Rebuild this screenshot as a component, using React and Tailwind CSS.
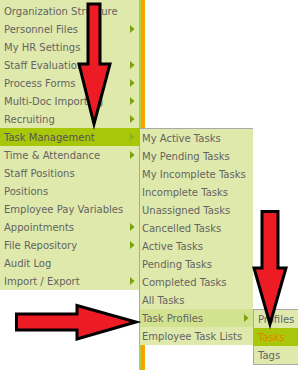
import React from 'react';

const mainItems = [
  { label: 'Organization Structure' },
  { label: 'Personnel Files', sub: true },
  { label: 'My HR Settings' },
  { label: 'Staff Evaluations', sub: true },
  { label: 'Process Forms', sub: true },
  { label: 'Multi-Doc Importing', sub: true },
  { label: 'Recruiting', sub: true },
  { label: 'Task Management', sub: true, active: true },
  { label: 'Time & Attendance', sub: true },
  { label: 'Staff Positions' },
  { label: 'Positions' },
  { label: 'Employee Pay Variables' },
  { label: 'Appointments', sub: true },
  { label: 'File Repository', sub: true },
  { label: 'Audit Log' },
  { label: 'Import / Export', sub: true },
];

const taskItems = [
  { label: 'My Active Tasks' },
  { label: 'My Pending Tasks' },
  { label: 'My Incomplete Tasks' },
  { label: 'Incomplete Tasks' },
  { label: 'Unassigned Tasks' },
  { label: 'Cancelled Tasks' },
  { label: 'Active Tasks' },
  { label: 'Pending Tasks' },
  { label: 'Completed Tasks' },
  { label: 'All Tasks' },
  { label: 'Task Profiles', sub: true, hover: true },
  { label: 'Employee Task Lists' },
];

const profileItems = [
  { label: 'Profiles' },
  { label: 'Tasks', active: true },
  { label: 'Tags' },
];

const SubArrow = ({ light }) => (
  <svg width="5" height="8" viewBox="0 0 5 8" className="shrink-0">
    <polygon points="0,0 4.5,4 0,8" fill={light ? '#8db31a' : '#7ba10d'} />
  </svg>
);

// red annotation arrows drawn over the menu
const Annotations = () => (
  <svg className="absolute inset-0 pointer-events-none" width="298" height="370">
    <g fill="#ed1c24" stroke="#000" strokeWidth="3" strokeLinejoin="miter">
      <polygon points="88,4 100,4 100,64 110,64 94,124 79,64 88,64" />
      <polygon points="16.5,314 77,314 77,305.5 136,322 77,339 77,330 16.5,330" />
      <polygon points="262,211.5 278,211.5 278,268 286,268 270,324 254,268 262,268" />
    </g>
  </svg>
);

export default function App() {
  return (
    <div className="relative w-[298px] h-[370px] overflow-hidden bg-white font-['DejaVu_Sans',sans-serif] text-[10px] text-[#646464]">
      <div className="flex h-full">
        <div className="w-[139px]">
          <ul className="bg-[#dfe9ab] pt-[2px]">
            {mainItems.map((item) => (
              <li
                key={item.label}
                className={`h-[18px] flex items-center justify-between pl-[4px] pr-[4px] ${
                  item.active ? 'bg-[#a8c70a] text-[#555]' : ''
                }`}
              >
                <span className="whitespace-nowrap">{item.label}</span>
                {item.sub && <SubArrow light={item.active} />}
              </li>
            ))}
          </ul>
        </div>
        <div className="w-[2px] bg-[#b5cf3a]" />
        <div className="w-[4px] bg-[#f6a500]" />
      </div>

      {/* task management flyout */}
      <ul className="absolute left-[139px] top-[128px] w-[114px] bg-[#dfe9ab] border-l border-t border-[#a9a9a9]">
        {taskItems.map((item) => (
          <li
            key={item.label}
            className={`h-[18px] flex items-center justify-between pl-[2px] pr-[4px] ${
              item.hover ? 'bg-[#d3e28f]' : ''
            }`}
          >
            <span className="whitespace-nowrap">{item.label}</span>
            {item.sub && <SubArrow />}
          </li>
        ))}
      </ul>

      {/* task profiles flyout */}
      <ul className="absolute left-[253px] top-[309px] w-[60px] bg-[#dfe9ab] border border-[#a9a9a9]">
        {profileItems.map((item) => (
          <li
            key={item.label}
            className={`h-[18px] flex items-center pl-[4px] ${
              item.active ? 'bg-[#a8c70a] text-[#f47a00]' : ''
            }`}
          >
            <span className="whitespace-nowrap">{item.label}</span>
          </li>
        ))}
      </ul>

      <Annotations />
    </div>
  );
}
